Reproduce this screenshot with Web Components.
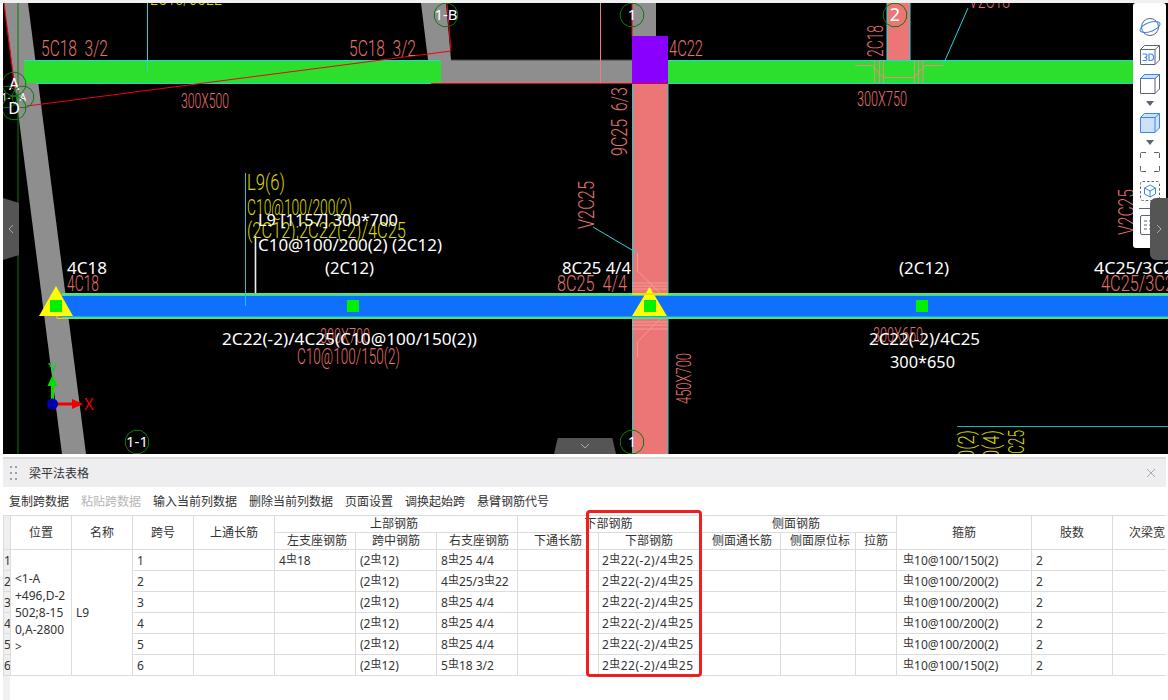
<!DOCTYPE html>
<html lang="zh">
<head>
<meta charset="utf-8">
<title>梁平法表格</title>
<style>
  html, body { margin: 0; height: 700px; overflow: hidden; background: #fff; }
  body { display: flex; flex-direction: column; box-sizing: border-box; border-top: 3px solid #f0f0f0; font-family: "Noto Sans", "Noto Sans CJK SC", sans-serif; }
</style>
</head>
<body>
<cad-view>
  <view-tools></view-tools>
</cad-view>
<beam-panel heading="梁平法表格">
  <action-button slot="actions">复制跨数据</action-button>
  <action-button slot="actions" disabled>粘贴跨数据</action-button>
  <action-button slot="actions">输入当前列数据</action-button>
  <action-button slot="actions">删除当前列数据</action-button>
  <action-button slot="actions">页面设置</action-button>
  <action-button slot="actions">调换起始跨</action-button>
  <action-button slot="actions">悬臂钢筋代号</action-button>
  <beam-table></beam-table>
</beam-panel>

<script>
const PINK = '#e0706f', YEL = '#d8d800', WHITE = '#fff', CYAN = '#20d8d8', GRID = '#0c7a0c'

// t: [text, x, baseline, width, colour, size, rotated?]
const cadTexts = [
  ['2C18/5C22', 150, 5, 72, YEL, 21],
  ['5C18  3/2', 41, 56, 67, PINK, 22],
  ['5C18  3/2', 349, 56, 67, PINK, 22],
  ['300X500', 181, 108, 48, PINK, 21],
  ['4C22', 669, 56, 34, PINK, 22],
  ['9C25  6/3', 627, 156, 69, PINK, 22, 1],
  ['V2C25', 594, 229, 48, PINK, 22, 1],
  ['2C18', 883, 57, 32, PINK, 22, 1],
  ['V2C18', 969, 8, 41, PINK, 21],
  ['300X750', 857, 106, 50, PINK, 21],
  ['V2C25', 1134, 235, 46, PINK, 22, 1],
  ['L9(6)', 247, 190, 38, YEL, 22],
  ['C10@100/200(2)', 247, 215, 105, YEL, 22],
  ['(2C12);2C22(-2)/4C25', 247, 238, 159, YEL, 22],
  ['4C18', 67, 291, 32, PINK, 22],
  ['8C25  4/4', 557, 291, 70, PINK, 22],
  ['4C25/3C22', 1101, 291, 82, PINK, 22],
  ['300X700', 320, 343, 50, PINK, 21],
  ['C10@100/150(2)', 297, 364, 103, PINK, 22],
  ['300X650', 873, 342, 50, PINK, 21],
  ['450X700', 691, 404, 51, PINK, 21, 1],
  ['0(2)', 974, 459, 29, YEL, 22, 1],
  ['0(4)', 999, 459, 29, YEL, 22, 1],
  ['C25', 1024, 454, 24, YEL, 22, 1],
  ['L9 [1157] 300*700', 258, 226, 140, WHITE, 16],
  ['C10@100/200(2) (2C12)', 258, 251, 184, WHITE, 16],
  ['(2C12)', 325, 274, 49, WHITE, 16],
  ['4C18', 67, 274, 40, WHITE, 16],
  ['8C25 4/4', 562, 274, 69, WHITE, 16],
  ['(2C12)', 899, 274, 50, WHITE, 16],
  ['4C25/3C22', 1094, 274, 90, WHITE, 16],
  ['2C22(-2)/4C25(C10@100/150(2))', 222, 345, 255, WHITE, 16],
  ['2C22(-2)/4C25', 869, 345, 111, WHITE, 16],
  ['300*650', 890, 368, 65, WHITE, 16],
]
const bubbles = [
  [14, 84, 12, 'A', 16], [23, 97, 11, 'A', 10], [6, 97, 11, '1-', 10], [14, 108, 12, 'D', 16],
  [446, 15, 12, '1-B', 15], [632, 15, 12, '1', 15], [895, 15, 12, '2', 18],
  [137, 442, 12, '1-1', 15], [632, 442, 12, '1', 15],
]

function gon(cx, cy, r) {
  let pts = []
  for (let i = 0; i < 12; i++) {
    const a = (i + .5) * Math.PI / 6
    pts.push((cx + r * Math.cos(a)).toFixed(1) + ',' + (cy + r * Math.sin(a)).toFixed(1))
  }
  return `<polygon points="${pts.join(' ')}" fill="none" stroke="${GRID}" stroke-width="1"/>`
}

class CadView extends HTMLElement {
  constructor() {
    super()
    this.attachShadow({ mode: 'open' })
  }
  connectedCallback() {
    const texts = cadTexts.map(([s, x, y, w, c, size, rot]) => {
      const look = c === WHITE ? 'font-family="Noto Sans"' : 'font-family="Roboto" font-weight="300"'
      const tr = rot ? ` transform="rotate(-90 ${x} ${y})"` : ''
      return `<text x="${x}" y="${y}" fill="${c}" ${look} font-size="${size}" textLength="${w}" lengthAdjust="spacingAndGlyphs"${tr}>${s}</text>`
    }).join('')
    const circles = bubbles.map(([x, y, r, s, size]) => gon(x, y, r) +
      `<text x="${x}" y="${y + size * .36}" fill="#fff" font-family="Noto Sans" font-size="${size}" text-anchor="middle">${s}</text>`).join('')

    this.shadowRoot.innerHTML = `
      <style>
        :host { display: block; position: relative; flex: none; width: 1165px; height: 451px; margin: 0 0 0 3px; background: #000; overflow: hidden; }
        svg { display: block; }
        svg text { white-space: pre; }
        .flap { position: absolute; background: #555; color: #aaa; display: flex; align-items: center; justify-content: center; }
        .left { left: 0; top: 195px; width: 16px; height: 62px; clip-path: polygon(0 0, 100% 8%, 100% 92%, 0 100%); }
        .right { right: 0; top: 195px; width: 18px; height: 62px; border-radius: 6px 0 0 6px; }
        .bottom { left: 551px; bottom: 0; width: 62px; height: 16px; clip-path: polygon(6% 0, 94% 0, 100% 100%, 0 100%); }
        .flap svg { width: 10px; height: 10px; }
      </style>
      <svg width="1165" height="451" viewBox="3 3 1165 451" shape-rendering="geometricPrecision">
        <polygon points="4,3 28,3 86,454 62,454" fill="#8e8e8e"/>
        <line x1="18" y1="3" x2="18" y2="454" stroke="${GRID}"/>
        <polyline points="4,3 15,90" fill="none" stroke="#f00016" stroke-width="1.2"/>

        <polygon points="421,3 446,3 451,60 632,60 632,83 431,83 428,60" fill="#8e8e8e"/>
        <line x1="451" y1="60" x2="632" y2="60" stroke="#444"/>
        <rect x="632" y="3" width="24" height="34" fill="#8e8e8e"/>

        <rect x="24" y="60" width="417" height="23" fill="#2ddf2d"/>
        <rect x="668" y="60" width="470" height="23" fill="#2ddf2d"/>
        <path d="M24 60.5H441M668 60.5H1138M36 83.5H431M668 83.5H1138" stroke="${CYAN}" fill="none"/>
        <line x1="147.5" y1="3" x2="147.5" y2="71" stroke="${CYAN}"/>
        <path d="M27 106 451 51 447 3M431 83.5H632M632 3V36" fill="none" stroke="#f00016" stroke-width="1"/>
        <line x1="600.5" y1="3" x2="600.5" y2="83" stroke="#e88080"/>

        <rect x="887" y="3" width="23" height="57" fill="#ec7575"/>
        <path d="M887 3V60M910 3V60" stroke="#20e0e8" fill="none"/>
        <path d="M968 8 943 65" stroke="${CYAN}" fill="none"/>
        <path d="M855 65.5H872L883 77.5H914L925 65.5H943M874.5 60V83M879.5 60V83M883.5 60V83M914.5 60V83M918.5 60V83M923 60V83" stroke="#ea8a80" fill="none"/>

        <rect x="632" y="83" width="36" height="371" fill="#ec7575"/>
        <path d="M632.5 83V454M668 83V454" stroke="#1fd0d8" fill="none"/>
        <rect x="632" y="36" width="36" height="47" fill="#8a00ff"/>
        <line x1="632" y1="83.5" x2="668" y2="83.5" stroke="#e00020"/>
        <path d="M593 227 637 253" stroke="${CYAN}" fill="none"/>
        <path d="M637.5 253V271L660 293M660 319 637.5 342V357M632 283H668M632 286H668M632 289H668M632 322H668M632 325H668M632 329H668" stroke="#f59a9a" fill="none"/>

        <rect x="62" y="293" width="1106" height="26" fill="#5fe06a"/>
        <rect x="62" y="295" width="1106" height="22" fill="#0f6fff"/>
        <path d="M62 295.5H1168M62 317H1168" stroke="#27d7d0" fill="none"/>
        <line x1="245.5" y1="173" x2="245.5" y2="306" stroke="#18c8d0"/>
        <line x1="255.5" y1="236" x2="255.5" y2="293" stroke="#eee" stroke-width="1.6"/>
        <path d="M957 426.5H1168" stroke="#10b8b8"/>

        <polygon points="56,286 39,316 73,316" fill="#ff0"/>
        <path d="M57 316V318.5H68" stroke="#d8d800" fill="none"/>
        <polygon points="649.5,287 632,316 667,316" fill="#ff0"/>
        <rect x="632" y="293" width="36" height="2" fill="#e8e000"/>
        <rect x="50" y="300" width="12" height="12" fill="#00f000"/>
        <rect x="644" y="300" width="12" height="12" fill="#00f000"/>
        <rect x="347" y="300" width="12" height="12" fill="#00f000"/>
        <rect x="916" y="300" width="12" height="12" fill="#00f000"/>

        ${texts}
        ${circles}

        <rect x="51" y="384" width="3" height="18" fill="#00e000"/>
        <polygon points="52.5,375 47.5,386 57.5,386" fill="#00e000"/>
        <rect x="56" y="402.5" width="18" height="3" fill="#f00000"/>
        <polygon points="83,404 72,399 72,409" fill="#f00000"/>
        <circle cx="52.5" cy="404" r="5.5" fill="#0000b0"/>
        <text x="52.5" y="373" fill="#00e000" font-family="Noto Sans" font-size="15" text-anchor="middle">Y</text>
        <text x="89" y="410" fill="#f00000" font-family="Noto Sans" font-size="16" text-anchor="middle">X</text>
      </svg>
      <div class="flap left"><svg viewBox="0 0 10 10"><path d="M7 1 3 5 7 9" fill="none" stroke="currentColor"/></svg></div>
      <slot></slot>
      <div class="flap right"><svg viewBox="0 0 10 10"><path d="M3 1 7 5 3 9" fill="none" stroke="currentColor"/></svg></div>
      <div class="flap bottom"><svg viewBox="0 0 10 10"><path d="M1 3 5 7 9 3" fill="none" stroke="currentColor"/></svg></div>`
  }
}
customElements.define('cad-view', CadView)

class ViewTools extends HTMLElement {
  constructor() {
    super()
    this.attachShadow({ mode: 'open' })
  }
  connectedCallback() {
    const G = '#5c6470', B = '#3a86ee'
    const cube = (fill, top) => `<path d="M.5 4.5H15V19.5H.5ZM.5 4.5 4.5.5H19.5V15L15 19.5M15 4.5 19.5.5" fill="${fill}" stroke="${G}"/>
      ${top ? `<path d="M.5 4.5 4.5.5H19.5L15 4.5Z" fill="#cfe0fa" stroke="${B}"/>` : ''}`
    this.shadowRoot.innerHTML = `
      <style>
        :host { display: flex; flex-direction: column; align-items: center; position: absolute; top: 0; left: 1130px; width: 33px; height: 245px; padding-top: 14px; box-sizing: border-box; background: #fff; border-radius: 3px; }
        svg { display: block; flex: none; }
      </style>
      <svg width="22" height="20" viewBox="0 0 22 20"><circle cx="11" cy="10" r="8.5" fill="none" stroke="${G}"/><ellipse cx="11" cy="10" rx="10.5" ry="4.5" transform="rotate(-20 11 10)" fill="none" stroke="${B}"/></svg>
      <svg width="20" height="20" viewBox="0 0 20 20" style="margin-top:8px">${cube('none')}<path d="M2.5 15.5H5.5Q7 15.5 7 14Q7 12.5 4.5 12.5Q7 12.5 7 10.5Q7 9 5.5 9H2.5M9 9V15.5H10.5Q13.5 15.5 13.5 12.2Q13.5 9 10.5 9Z" fill="none" stroke="${B}" stroke-width="1.1"/></svg>
      <svg width="20" height="20" viewBox="0 0 20 20" style="margin-top:9px">${cube('none', 1)}</svg>
      <svg width="8" height="6" viewBox="0 0 8 6" style="margin-top:7px"><path d="M0 0H8L4 5Z" fill="${G}"/></svg>
      <svg width="20" height="20" viewBox="0 0 20 20" style="margin-top:6px"><path d="M.5 4.5H15V19.5H.5ZM.5 4.5 4.5.5H19.5V15L15 19.5M15 4.5 19.5.5" fill="#cfe0fa" stroke="${B}"/></svg>
      <svg width="8" height="6" viewBox="0 0 8 6" style="margin-top:7px"><path d="M0 0H8L4 5Z" fill="${G}"/></svg>
      <svg width="20" height="20" viewBox="0 0 20 20" style="margin-top:6px"><path d="M.5 6V1.5Q.5.5 1.5.5H6M14 .5H18.5Q19.5.5 19.5 1.5V6M19.5 14V18.5Q19.5 19.5 18.5 19.5H14M6 19.5H1.5Q.5 19.5.5 18.5V14" fill="none" stroke="${G}"/></svg>
      <svg width="20" height="20" viewBox="0 0 20 20" style="margin-top:9px"><rect x=".5" y=".5" width="19" height="19" rx="2" fill="none" stroke="${G}" stroke-dasharray="2.5 2"/><path d="M10 4 15.5 7V13L10 16 4.5 13V7ZM4.5 7 10 10 15.5 7M10 10V16" fill="none" stroke="${B}"/></svg>
      <div style="width:22px;height:1px;background:${G};margin-top:7px"></div>
      <svg width="20" height="20" viewBox="0 0 20 20" style="margin-top:6px"><rect x=".5" y=".5" width="19" height="19" rx="1.5" fill="none" stroke="${G}"/><path d="M4 6H7M9 6H16M4 10H7M9 10H16M4 14H7M9 14H16" stroke="${G}"/></svg>`
  }
}
customElements.define('view-tools', ViewTools)

class BeamPanel extends HTMLElement {
  constructor() {
    super()
    this.attachShadow({ mode: 'open' })
  }
  connectedCallback() {
    this.shadowRoot.innerHTML = `
      <style>
        :host { display: flex; flex-direction: column; position: relative; flex: 1; min-height: 0; width: 1163px; margin: 3px 0 0 3px; border-top: 2px solid #dcdcdc; font-size: 12px; color: #333; }
        .bar { flex: none; height: 28px; display: flex; align-items: center; background: #eeeef0; padding: 0 10px 0 7px; }
        .grip { display: block; width: 7px; height: 15px; margin-right: 12px; flex: none; }
        .name { flex: 1; }
        .close { width: 10px; height: 10px; }
        .actions { flex: none; height: 28px; display: flex; align-items: center; gap: 12px; padding-left: 6px; }
        .body { flex: 1; min-height: 0; overflow: hidden; }
        .mark { position: absolute; left: 583px; top: 51px; width: 116px; height: 167px; box-sizing: border-box; border: 3px solid #f01f1f; border-radius: 4px; }
      </style>
      <div class="bar">
        <svg class="grip" viewBox="0 0 7 15"><path d="M0 0h2v2H0zM5 0h2v2H5zM0 6h2v2H0zM5 6h2v2H5zM0 12h2v2H0zM5 12h2v2H5z" fill="#a0a0a0"/></svg>
        <span class="name">${this.getAttribute('heading')}</span>
        <svg class="close" viewBox="0 0 10 10"><path d="M1 1 9 9M9 1 1 9" stroke="#aaa" fill="none"/></svg>
      </div>
      <div class="actions"><slot name="actions"></slot></div>
      <div class="body"><slot></slot></div>
      <div class="mark"></div>`
  }
}
customElements.define('beam-panel', BeamPanel)

class ActionButton extends HTMLElement {
  constructor() {
    super()
    this.attachShadow({ mode: 'open' })
  }
  connectedCallback() {
    this.shadowRoot.innerHTML = `
      <style>
        :host { display: block; color: #333; white-space: nowrap; cursor: pointer; }
        :host([disabled]) { color: #b5b5b5; cursor: default; }
      </style>
      <slot></slot>`
  }
}
customElements.define('action-button', ActionButton)

const spanRows = [
  ['1', '4虫18', '(2虫12)', '8虫25 4/4', '虫10@100/150(2)'],
  ['2', '', '(2虫12)', '4虫25/3虫22', '虫10@100/200(2)'],
  ['3', '', '(2虫12)', '8虫25 4/4', '虫10@100/200(2)'],
  ['4', '', '(2虫12)', '8虫25 4/4', '虫10@100/200(2)'],
  ['5', '', '(2虫12)', '8虫25 4/4', '虫10@100/200(2)'],
  ['6', '', '(2虫12)', '5虫18 3/2', '虫10@100/150(2)'],
]
const colWidths = [7, 61, 61, 61, 81, 81, 81, 81, 81, 101, 81, 75, 41, 135, 81, 81]

class BeamTable extends HTMLElement {
  constructor() {
    super()
    this.attachShadow({ mode: 'open' })
  }
  rebar(s) {
    return s.replace(/虫/g, '<i>虫</i>')
  }
  connectedCallback() {
    const rows = spanRows.map(([n, left, mid, right, stir], i) => `
      <tr>
        <td class="num">${n}</td>
        ${i === 0 ? `<td rowspan="6" class="pos">&lt;1-A<br>+496,D-2<br>502;8-15<br>0,A-2800<br>&gt;</td><td rowspan="6">L9</td>` : ''}
        <td>${n}</td><td></td>
        <td>${this.rebar(left)}</td><td>${this.rebar(mid)}</td><td>${this.rebar(right)}</td>
        <td></td><td class="low">${this.rebar('2虫22(-2)/4虫25')}</td>
        <td></td><td></td><td></td>
        <td class="st">${this.rebar(stir)}</td><td>2</td><td></td>
      </tr>`).join('')
    this.shadowRoot.innerHTML = `
      <style>
        :host { display: block; height: 100%; overflow: hidden; position: relative; }
        .strip { position: absolute; left: 0; top: 0; bottom: 0; width: 7px; background: #f0f0f0; }
        table { position: relative; border-collapse: collapse; table-layout: fixed; width: ${colWidths.reduce((a, b) => a + b)}px; }
        th, td { border: 1px solid #dcdcdc; padding: 0 4px; font-weight: normal; font-size: 12px; color: #333; white-space: nowrap; overflow: hidden; text-align: left; }
        th { text-align: center; line-height: 16px; padding: 0; }
        thead tr { height: 17px; }
        tbody tr { height: 21px; }
        .num, .corner { background: #efefef; padding: 0; text-align: center; }
        .pos { line-height: 17px; padding-left: 4px; }
        .st { padding-left: 6px; }
        .low { padding-left: 3px; letter-spacing: .45px; }
        th.r { padding-left: 4px; }
        th.g { padding-right: 4px; }
        th.w { padding-right: 12px; }
        i { font-style: normal; font-size: 11px; position: relative; top: -2px; }
      </style>
      <div class="strip"></div>
      <table>
        <colgroup>${colWidths.map(w => `<col style="width:${w}px">`).join('')}</colgroup>
        <thead>
          <tr>
            <th rowspan="2" class="corner"></th>
            <th rowspan="2">位置</th><th rowspan="2">名称</th><th rowspan="2">跨号</th><th rowspan="2">上通长筋</th>
            <th colspan="3" class="g">上部钢筋</th><th colspan="2">下部钢筋</th><th colspan="3" class="g">侧面钢筋</th>
            <th rowspan="2">箍筋</th><th rowspan="2">肢数</th><th rowspan="2" class="w">次梁宽</th>
          </tr>
          <tr>
            <th class="r">左支座钢筋</th><th>跨中钢筋</th><th class="r">右支座钢筋</th><th>下通长筋</th><th>下部钢筋</th>
            <th class="r">侧面通长筋</th><th class="r">侧面原位标</th><th>拉筋</th>
          </tr>
        </thead>
        <tbody>${rows}</tbody>
      </table>`
  }
}
customElements.define('beam-table', BeamTable)
</script>
</body>
</html>
